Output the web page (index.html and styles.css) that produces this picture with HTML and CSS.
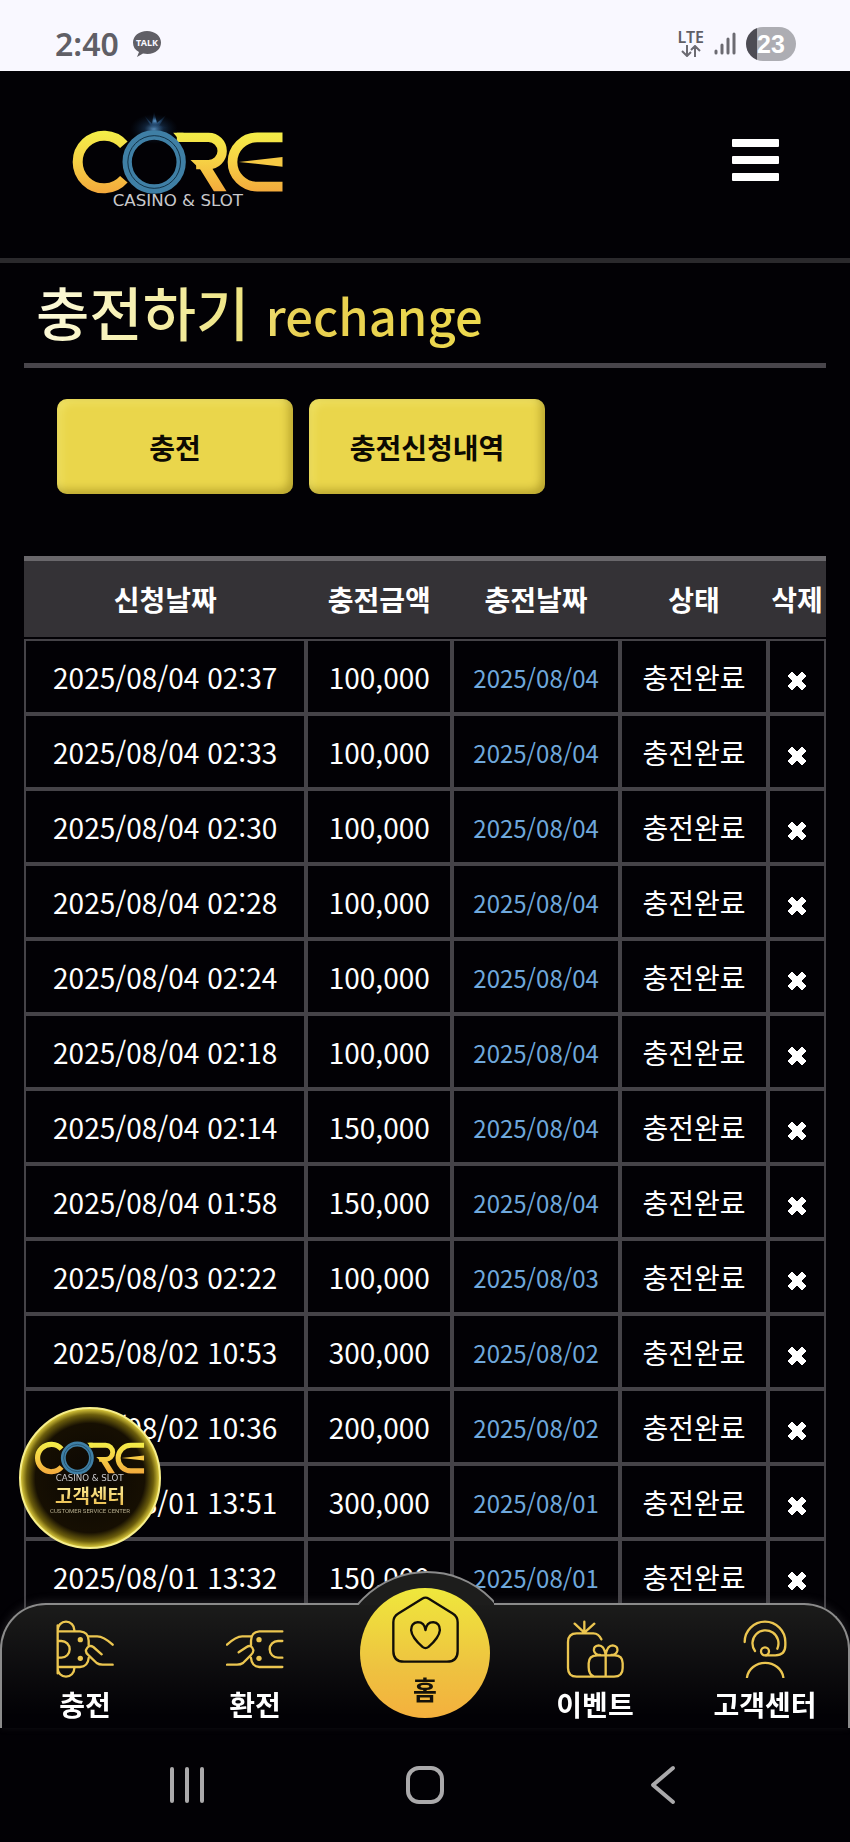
FILE: index.html
```html
<!DOCTYPE html>
<html lang="ko">
<head>
    <meta charset="UTF-8">
    <meta name="viewport" content="width=device-width, initial-scale=1.0">
    <title>충전하기</title>
    <link rel="stylesheet" href="styles.css">
</head>
<body>
    <!-- shared drawings -->
    <svg class="defs" width="0" height="0" aria-hidden="true">
        <defs>
            <linearGradient id="gold" gradientUnits="userSpaceOnUse" x1="0" y1="395" x2="0" y2="578">
                <stop offset="0" stop-color="#f3ee48"/>
                <stop offset="0.45" stop-color="#f6d345"/>
                <stop offset="1" stop-color="#f3a93c"/>
            </linearGradient>
            <radialGradient id="glow">
                <stop offset="0" stop-color="#6fb4ee" stop-opacity="0.8"/>
                <stop offset="0.4" stop-color="#2b6096" stop-opacity="0.35"/>
                <stop offset="1" stop-color="#103050" stop-opacity="0"/>
            </radialGradient>
            <symbol id="core" viewBox="210 330 650 300">
                <g fill="none" stroke="url(#gold)">
                    <path d="M371 434A79 79 0 1 0 371 538" stroke-width="30"/>
                    <path d="M530 412H625A41 41 0 0 1 625 494H588" stroke-width="28"/>
                    <path d="M847 412H771A74 74 0 0 0 771 560H847" stroke-width="29"/>
                </g>
                <path d="M519 398H550V426H543ZM571 480H610L634 502L679 574H641L600 508Z" fill="url(#gold)"/>
                <path d="M716 486L847 471V500Z" fill="#f6c944"/>
                <circle cx="462" cy="486" r="81" fill="none" stroke="#3f7fa5" stroke-width="28"/>
                <circle cx="462" cy="486" r="79" fill="none" stroke="#123247" stroke-width="3"/>
                <text x="533" y="619" text-anchor="middle" class="core-sub">CASINO &amp; SLOT</text>
            </symbol>
            <symbol id="x" viewBox="0 0 20 20">
                <path d="M5 1L10 6L15 1L19 5L14 10L19 15L15 19L10 14L5 19L1 15L6 10L1 5Z" fill="#fff" stroke="#fff" stroke-linejoin="round"/>
            </symbol>
        </defs>
    </svg>

    <div class="status-bar">
        <div class="status-left">
            <span class="time">2:40</span>
            <svg class="talk" viewBox="0 0 30 28">
                <path d="M15 1C7 1 1 6 1 12.500C1 17 3 20 7 22L5 27L11 23.500C22 25.500 29 20 29 12.500C29 6 23 1 15 1Z" fill="#605f66"/>
                <text x="15" y="16" text-anchor="middle">TALK</text>
            </svg>
        </div>
        <div class="status-right">
            <div class="lte">
                <span>LTE</span>
                <svg width="20" height="12" viewBox="0 0 20 12" fill="none" stroke="#6c6b72" stroke-width="2"><path d="M6 0V11M1 6L6 11L10 7M14 12V1M10 5L14 1L19 6"/></svg>
            </div>
            <svg width="22" height="24" viewBox="0 0 22 24" fill="none" stroke="#6c6b72" stroke-width="3" stroke-linecap="round"><path d="M2 19V21M8 13V21M14 7V21M20 2V21"/></svg>
            <span class="battery">23</span>
        </div>
    </div>

    <header class="header">
        <a href="#" class="logo" aria-label="CORE">
            <svg viewBox="0 0 217 100">
                <ellipse cx="84" cy="19" rx="24" ry="15" fill="url(#glow)"/>
                <path d="M84 21L74 5L82 14L84 1L87 13L96 5L89 16L103 18L86 21L67 19Z" fill="url(#glow)"/>
                <use href="#core" width="217" height="100"/>
            </svg>
        </a>
        <button class="menu" aria-label="메뉴"><span></span><span></span><span></span></button>
    </header>

    <main class="content">
        <h1 class="title"><span class="title-text">충전하기 <small>rechange</small></span></h1>
        <div class="button-container">
            <button>충전</button>
            <button>충전신청내역</button>
        </div>

        <table class="history">
            <colgroup>
                <col class="c-date"><col class="c-amount"><col class="c-done"><col class="c-state"><col class="c-del">
            </colgroup>
            <thead>
                <tr><th>신청날짜</th><th>충전금액</th><th>충전날짜</th><th>상태</th><th>삭제</th></tr>
            </thead>
            <tbody>
                <tr><td>2025/08/04 02:37</td><td>100,000</td><td class="done">2025/08/04</td><td>충전완료</td><td><button aria-label="삭제"><svg><use href="#x"/></svg></button></td></tr>
                <tr><td>2025/08/04 02:33</td><td>100,000</td><td class="done">2025/08/04</td><td>충전완료</td><td><button aria-label="삭제"><svg><use href="#x"/></svg></button></td></tr>
                <tr><td>2025/08/04 02:30</td><td>100,000</td><td class="done">2025/08/04</td><td>충전완료</td><td><button aria-label="삭제"><svg><use href="#x"/></svg></button></td></tr>
                <tr><td>2025/08/04 02:28</td><td>100,000</td><td class="done">2025/08/04</td><td>충전완료</td><td><button aria-label="삭제"><svg><use href="#x"/></svg></button></td></tr>
                <tr><td>2025/08/04 02:24</td><td>100,000</td><td class="done">2025/08/04</td><td>충전완료</td><td><button aria-label="삭제"><svg><use href="#x"/></svg></button></td></tr>
                <tr><td>2025/08/04 02:18</td><td>100,000</td><td class="done">2025/08/04</td><td>충전완료</td><td><button aria-label="삭제"><svg><use href="#x"/></svg></button></td></tr>
                <tr><td>2025/08/04 02:14</td><td>150,000</td><td class="done">2025/08/04</td><td>충전완료</td><td><button aria-label="삭제"><svg><use href="#x"/></svg></button></td></tr>
                <tr><td>2025/08/04 01:58</td><td>150,000</td><td class="done">2025/08/04</td><td>충전완료</td><td><button aria-label="삭제"><svg><use href="#x"/></svg></button></td></tr>
                <tr><td>2025/08/03 02:22</td><td>100,000</td><td class="done">2025/08/03</td><td>충전완료</td><td><button aria-label="삭제"><svg><use href="#x"/></svg></button></td></tr>
                <tr><td>2025/08/02 10:53</td><td>300,000</td><td class="done">2025/08/02</td><td>충전완료</td><td><button aria-label="삭제"><svg><use href="#x"/></svg></button></td></tr>
                <tr><td>2025/08/02 10:36</td><td>200,000</td><td class="done">2025/08/02</td><td>충전완료</td><td><button aria-label="삭제"><svg><use href="#x"/></svg></button></td></tr>
                <tr><td>2025/08/01 13:51</td><td>300,000</td><td class="done">2025/08/01</td><td>충전완료</td><td><button aria-label="삭제"><svg><use href="#x"/></svg></button></td></tr>
                <tr><td>2025/08/01 13:32</td><td>150,000</td><td class="done">2025/08/01</td><td>충전완료</td><td><button aria-label="삭제"><svg><use href="#x"/></svg></button></td></tr>
            </tbody>
        </table>
    </main>

    <a href="#" class="cs-badge">
        <svg class="cs-logo"><use href="#core"/></svg>
        <strong>고객센터</strong>
        <span>CUSTOMER SERVICE CENTER</span>
    </a>

    <div class="dock">
        <nav class="nav">
            <div class="bump"></div>
            <a href="#">
                <svg viewBox="168 150 174 174">
                    <path d="M173 166V310M173 180A25 25 0 0 1 223 180V184M173 295A25 25 0 0 0 223 295V292M173 184H240Q266 186 266 212V226M173 291H240Q264 289 266 264M176 213H184A25 25 0 0 1 184 263H176"/>
                    <path d="M264 199H290Q310 198 338 224M305 253L280 231Q266 222 258 240Q256 248 266 256L290 279Q297 284 308 284H338"/>
                    <circle class="dot" cx="241" cy="209" r="8"/><circle class="dot" cx="241" cy="265" r="8"/>
                </svg>
                <span>충전</span>
            </a>
            <a href="#">
                <svg viewBox="680 150 174 174">
                    <path d="M849 184H780Q755 186 755 212V226M849 291H780Q757 289 755 264M849 213H836A25 25 0 0 0 836 263H849"/>
                    <path d="M757 199H730Q711 198 683 224M718 247L742 231Q756 222 762 240Q763 248 754 256L731 279Q724 284 713 284H683"/>
                    <circle class="dot" cx="779" cy="209" r="8"/><circle class="dot" cx="779" cy="265" r="8"/>
                </svg>
                <span>환전</span>
            </a>
            <a href="#" class="home">
                <svg viewBox="185 140 200 200">
                    <path d="M275 148Q285 142 295 148L366 192Q381 201 381 218V304Q381 336 349 336H221Q189 336 189 304V218Q189 201 204 192Z"/>
                    <path d="M285 242Q282 218 262 218Q242 220 242 242Q244 264 276 292Q285 299 294 292Q326 264 328 242Q328 220 308 218Q288 218 285 242Z"/>
                </svg>
                <span>홈</span>
            </a>
            <a href="#">
                <svg viewBox="138 120 174 174">
                    <path d="M193 158V125M193 158L164 131M193 158L223 131M244 178Q236 160 220 160H170Q144 160 144 186V264Q144 290 170 290H282Q308 290 308 264V250Q308 226 284 226H232Q206 226 206 250V262Q206 284 222 290M257 226V290M257 224Q252 196 236 196Q220 198 222 212Q225 224 240 225M257 224Q262 196 278 196Q294 198 292 212Q289 224 274 225"/>
                </svg>
                <span>이벤트</span>
            </a>
            <a href="#">
                <svg viewBox="648 120 174 174">
                    <path d="M674 186A61 61 0 0 1 796 186V196Q796 226 766 226H738M705 213A39 39 0 1 1 772 206M681 292A55 50 0 0 1 790 292"/>
                    <circle cx="735" cy="214" r="12"/>
                </svg>
                <span>고객센터</span>
            </a>
        </nav>
        <div class="system-bar">
            <button aria-label="최근"><svg viewBox="0 0 40 40"><path d="M5 4V36M20 4V36M35 4V36"/></svg></button>
            <button aria-label="홈 화면"><svg viewBox="0 0 40 40"><rect x="3" y="3" width="34" height="34" rx="11"/></svg></button>
            <button aria-label="뒤로"><svg viewBox="0 0 40 40"><path d="M30 3L10 20L30 37"/></svg></button>
        </div>
    </div>
</body>
</html>
```
FILE: styles.css
```css
* {
    box-sizing: border-box;
}

body {
    margin: 0;
    padding-bottom: 228px;
    background-color: #020105;
    color: #fff;
    font-family: "Noto Sans CJK KR", sans-serif;
}

button {
    font-family: inherit;
    border: none;
    padding: 0;
    background: none;
    cursor: pointer;
}

a {
    color: inherit;
    text-decoration: none;
}

.defs {
    position: absolute;
}

/* status bar */
.status-bar {
    display: flex;
    justify-content: space-between;
    align-items: center;
    height: 71px;
    padding: 16px 54px 0 55px;
    background-color: #f9f8ff;
    color: #605f66;
    font-family: "Noto Sans", sans-serif;
}

.status-left,
.status-right {
    display: flex;
    align-items: center;
}

.status-left {
    gap: 13px;
}

.status-right {
    gap: 10px;
}

.time {
    font-size: 32px;
    font-weight: 600;
    line-height: 40px;
}

.talk {
    width: 30px;
    height: 28px;
}

.talk text {
    font: bold 9px "Noto Sans", sans-serif;
    fill: #f9f8ff;
}

.lte {
    display: flex;
    flex-direction: column;
    align-items: center;
    font-size: 16px;
    font-weight: 600;
    line-height: 15px;
}

.battery {
    width: 50px;
    height: 34px;
    border-radius: 17px;
    background: linear-gradient(to right, #4d4c54 11px, #adadb3 11px);
    color: #fff;
    font: bold 25px/34px "Liberation Sans", sans-serif;
    text-align: center;
}

/* header */
.header {
    display: flex;
    justify-content: space-between;
    align-items: center;
    height: 192px;
    padding: 0 71px 9px 70px;
    border-bottom: 5px solid #2a292c;
}

.logo svg {
    display: block;
    width: 217px;
    height: 100px;
}

.core-sub {
    font: 50px "DejaVu Sans", sans-serif;
    fill: #c9c9cc;
}

.menu {
    display: flex;
    flex-direction: column;
    gap: 9px;
    width: 47px;
}

.menu span {
    height: 8px;
    border-radius: 1px;
    background-color: #fff;
}

/* content */
.content {
    padding: 0 24px;
}

.title {
    height: 105px;
    margin: 0;
    padding-left: 12px;
    border-bottom: 5px solid #48454b;
    font-size: 58px;
    font-weight: 500;
    line-height: 96px;
    white-space: nowrap;
}

.title-text {
    background: linear-gradient(100deg, #fdfbe0, #efe584 45%, #e8cf50 60%, #ecd94e);
    -webkit-background-clip: text;
    background-clip: text;
    color: transparent;
}

.title small {
    font-size: 49px;
    line-height: 1;
}

.button-container {
    display: flex;
    gap: 16px;
    padding: 31px 33px 62px;
}

.button-container button {
    width: 236px;
    height: 95px;
    border-radius: 10px;
    background-color: #ead64b;
    box-shadow: inset -4px -4px 8px rgba(110, 90, 0, 0.4), inset 4px 4px 8px rgba(255, 255, 160, 0.3);
    color: #0d0a02;
    font-size: 28px;
    font-weight: 700;
}

.history {
    width: 100%;
    table-layout: fixed;
    border-collapse: separate;
    border-spacing: 0;
    font-size: 28px;
    line-height: 40px;
    text-align: center;
}

.c-date {
    width: 35.2%;
}

.c-amount {
    width: 18.2%;
}

.c-done {
    width: 20.9%;
}

.c-state {
    width: 18.5%;
}

.c-del {
    width: 7.2%;
}

.history th {
    height: 83px;
    padding: 0;
    border-top: 5px solid #69676b;
    border-bottom: 2px solid #020105;
    background-color: #343236;
    background-clip: padding-box;
    white-space: nowrap;
}

.history td {
    height: 75px;
    padding: 0;
    border: 2px solid #454348;
    white-space: nowrap;
}

.history td.done {
    padding-top: 2px;
    color: #6fa8dc;
    font-size: 24px;
}

.history td button {
    display: block;
    margin: 0 auto;
    padding-top: 8px;
}

.history td svg {
    display: block;
    width: 20px;
    height: 20px;
}

/* floating customer centre badge */
.cs-badge {
    position: fixed;
    left: 19px;
    bottom: 293px;
    display: flex;
    flex-direction: column;
    align-items: center;
    width: 142px;
    height: 142px;
    padding-top: 22px;
    border: 2px solid #f6ee8c;
    border-radius: 50%;
    background: radial-gradient(circle, #0b0703 0, #160f02 56%, #6b5d0c 65%, #d8c63a 71%);
}

.cs-badge .cs-logo {
    width: 114px;
    height: 52px;
}

.cs-badge strong {
    background: linear-gradient(#fff3a0, #e9b94a);
    -webkit-background-clip: text;
    background-clip: text;
    color: transparent;
    font-size: 19px;
    line-height: 24px;
}

.cs-badge span {
    color: #b3ab8c;
    font: 6px/8px Roboto, sans-serif;
}

/* bottom bars */
.dock {
    position: fixed;
    left: 0;
    right: 0;
    bottom: 0;
    background-color: #020105;
    border-radius: 46px 46px 0 0;
}

.nav {
    position: relative;
    display: grid;
    grid-template-columns: repeat(5, 1fr);
    height: 125px;
    border-radius: 46px 46px 0 0;
    background: linear-gradient(#1c1c1b, #020105 90%);
    box-shadow: 0 -2px 8px rgba(90, 90, 90, 0.3);
}

.nav::before {
    content: "";
    position: absolute;
    inset: 0;
    border: 2px solid #8b8b8b;
    border-bottom: none;
    border-radius: 46px 46px 0 0;
    pointer-events: none;
}

.nav a {
    display: flex;
    flex-direction: column;
    align-items: center;
    padding-top: 17px;
    font-size: 28px;
    font-weight: 700;
    line-height: 40px;
    white-space: nowrap;
}

.nav svg {
    width: 58px;
    height: 58px;
    margin-bottom: 6px;
    fill: none;
    stroke: #ecc650;
    stroke-width: 7;
    stroke-linecap: round;
    stroke-linejoin: round;
}

.nav .dot {
    fill: #ecc650;
    stroke: none;
}

/* round hump behind the home button */
.bump {
    position: absolute;
    left: 50%;
    top: -32px;
    width: 138px;
    height: 34px;
    margin-left: -69px;
    overflow: hidden;
}

.bump::before {
    content: "";
    position: absolute;
    left: -20px;
    top: 0;
    width: 178px;
    height: 178px;
    border: 2px solid #8b8b8b;
    border-radius: 50%;
    background-color: #1d1d1c;
}

.nav a.home {
    position: relative;
    justify-self: center;
    width: 130px;
    height: 130px;
    margin-top: -15px;
    padding-top: 8px;
    border-radius: 50%;
    background: linear-gradient(#efe83c, #eec340 60%, #f4b03d);
    color: #15120a;
    font-size: 26px;
}

.nav .home svg {
    width: 67px;
    height: 67px;
    stroke: #110e08;
}

.system-bar {
    display: grid;
    grid-template-columns: repeat(3, 1fr);
    align-items: center;
    width: 84%;
    height: 114px;
    margin: 0 auto;
}

.system-bar svg {
    display: block;
    width: 40px;
    height: 40px;
    margin: 0 auto;
    fill: none;
    stroke: #aaa9ab;
    stroke-width: 4;
    stroke-linecap: round;
    stroke-linejoin: round;
}
```
